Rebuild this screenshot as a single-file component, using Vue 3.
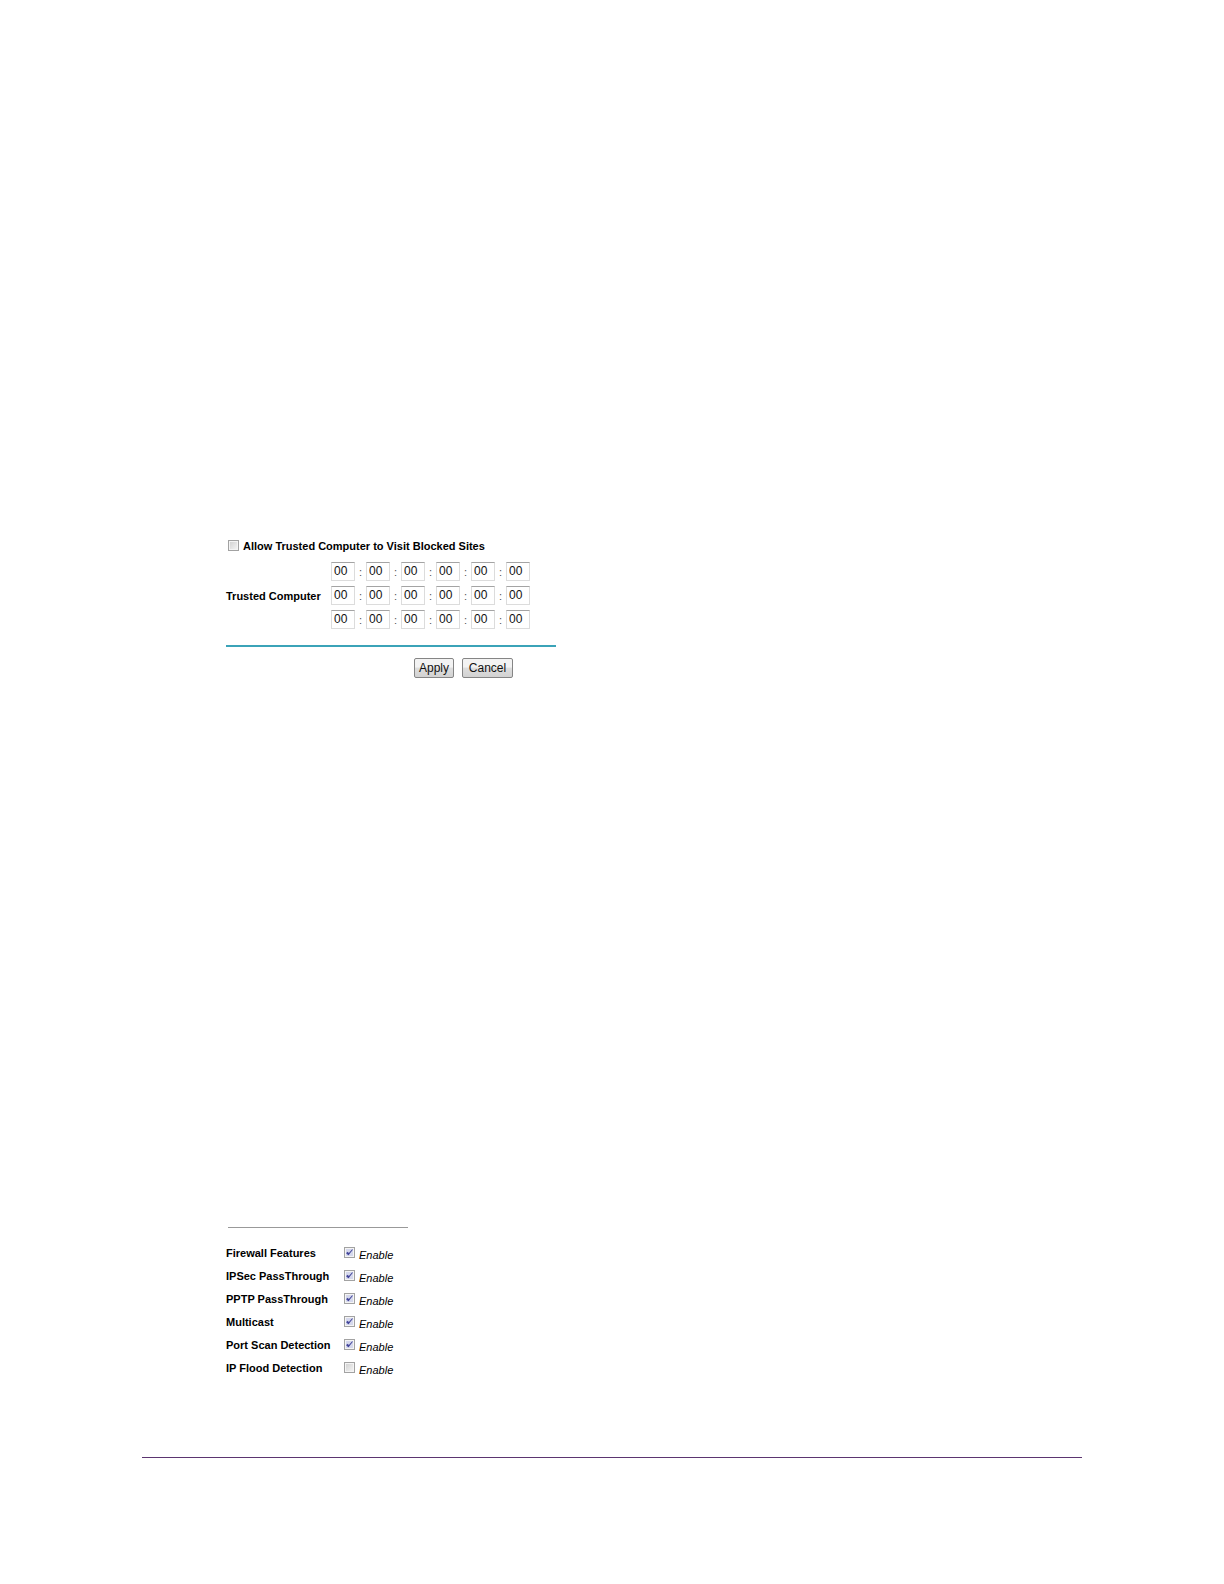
<template>
  <main class="page">
    <form class="trusted" @submit.prevent>
      <label class="allow">
        <input v-model="allowTrusted" class="check" type="checkbox" />
        <span>Allow Trusted Computer to Visit Blocked Sites</span>
      </label>
      <div class="trusted-body">
        <span id="trusted-label" class="trusted-label">Trusted Computer</span>
        <div class="mac-list" role="group" aria-labelledby="trusted-label">
          <div v-for="(mac, row) in macs" :key="row" class="mac-row">
            <template v-for="(part, col) in mac" :key="col">
              <span v-if="col > 0" class="colon">:</span>
              <input
                v-model="mac[col]"
                class="mac-input"
                type="text"
                maxlength="2"
                :aria-label="`Computer ${row + 1}, part ${col + 1}`"
              />
            </template>
          </div>
        </div>
      </div>
      <div class="actions">
        <button type="submit">Apply</button>
        <button class="cancel" type="button" @click="resetForm">Cancel</button>
      </div>
    </form>

    <section class="firewall">
      <div v-for="feature in features" :key="feature.id" class="feature">
        <span :id="feature.id + '-name'" class="feature-name">{{ feature.name }}</span>
        <input
          :id="feature.id"
          v-model="feature.enabled"
          class="check"
          type="checkbox"
          :aria-describedby="feature.id + '-name'"
        />
        <label :for="feature.id" class="enable">Enable</label>
      </div>
    </section>

    <hr class="footer-line" />
  </main>
</template>

<script setup>
import { ref } from "vue";

const emptyMacs = () => Array.from({ length: 3 }, () => Array(6).fill("00"));

const allowTrusted = ref(false);
const macs = ref(emptyMacs());

const features = ref([
  { id: "firewall", name: "Firewall Features", enabled: true },
  { id: "ipsec", name: "IPSec PassThrough", enabled: true },
  { id: "pptp", name: "PPTP PassThrough", enabled: true },
  { id: "multicast", name: "Multicast", enabled: true },
  { id: "port-scan", name: "Port Scan Detection", enabled: true },
  { id: "ip-flood", name: "IP Flood Detection", enabled: false }
]);

// Back to the empty addresses
const resetForm = () => {
  allowTrusted.value = false;
  macs.value = emptyMacs();
};
</script>

<style>
body {
  background: #fff;
}
</style>

<style scoped>
.page {
  padding: 538px 142px 126px;
  font-family: "Liberation Sans", Arial, sans-serif;
  font-size: 11px;
  line-height: 16px;
  color: #000;
}

/* Checkbox */
.check {
  appearance: none;
  box-sizing: border-box;
  flex: none;
  width: 11px;
  height: 11px;
  margin: 0;
  border: 1px solid #a2a2a2;
  background: linear-gradient(135deg, #cfcfcf, #f6f6f6);
  box-shadow: inset 0 0 0 1px #f4f4f4;
}
.check:checked {
  background: #d5d8ec;
}
.check:checked::before {
  content: "";
  display: block;
  width: 2px;
  height: 5px;
  margin: 0 auto;
  border: solid #42459a;
  border-width: 0 1px 2px 0;
  transform: rotate(40deg);
}

/* Trusted computer */
.trusted {
  max-width: 330px;
  margin-left: 84px;
}
.allow {
  display: flex;
  align-items: center;
  gap: 4px;
  padding-left: 2px;
  font-weight: bold;
}
.allow .check {
  margin-bottom: 2px;
}
.trusted-body {
  display: flex;
  align-items: center;
  justify-content: space-between;
  margin-top: 8px;
  padding: 0 26px 16px 0;
  border-bottom: 2px solid #3ba3b8;
}
.trusted-label {
  font-weight: bold;
}
.mac-list {
  display: flex;
  flex-direction: column;
  gap: 5px;
}
.mac-row {
  display: flex;
  align-items: center;
}
.mac-input {
  box-sizing: border-box;
  width: 24px;
  height: 19px;
  padding: 0 2px 1px;
  border: 1px solid #dcdcdc;
  border-top-color: #a4a4a4;
  background: #fff;
  font: inherit;
  font-size: 12px;
  color: #111;
}
.colon {
  width: 11px;
  text-align: center;
  color: #555;
}
.actions {
  display: flex;
  justify-content: flex-end;
  gap: 8px;
  margin-top: 11px;
  padding-right: 43px;
}
.actions button {
  height: 20px;
  padding: 0 4px;
  border: 1px solid #858585;
  border-radius: 2px;
  background: linear-gradient(#f3f3f3 45%, #dedede 50%, #d2d2d2);
  font: inherit;
  font-size: 12px;
  color: #111;
}
.actions .cancel {
  min-width: 51px;
}

/* Firewall options */
.firewall {
  max-width: 182px;
  margin: 549px 0 0 84px;
}
.firewall::before {
  content: "";
  display: block;
  margin: 0 0 13px 2px;
  border-top: 1px solid #999;
}
.feature {
  display: grid;
  grid-template-columns: 118px 11px 1fr;
  align-items: center;
  height: 23px;
}
.feature-name {
  font-weight: bold;
}
.enable {
  padding: 4px 0 0 4px;
  font-style: italic;
}

.footer-line {
  margin: 78px 0 0;
  border: 0;
  border-top: 1px solid #5b3570;
}
</style>
